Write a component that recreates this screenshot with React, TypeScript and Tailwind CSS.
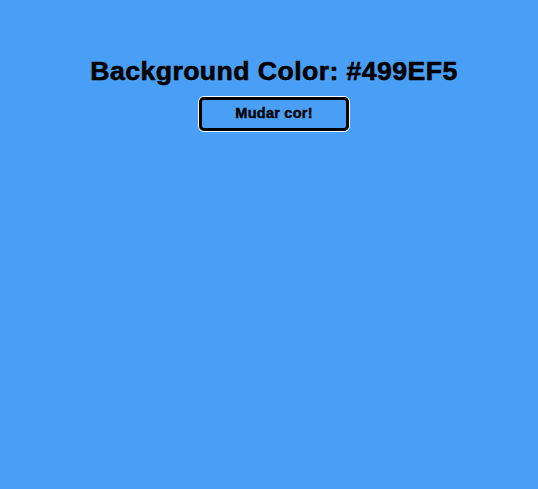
import React, { useState } from "react";

const colors = ["#499EF5", "#F5A349", "#49F5A0", "#F549C8", "#C8F549"];

const App: React.FC = () => {
  const [index, setIndex] = useState(0);
  const color = colors[index];

  return (
    <div
      className="min-h-screen w-full flex flex-col items-center pt-[58px] pl-[10px] font-['Liberation_Sans',Arial,sans-serif] text-black"
      style={{ backgroundColor: color }}
    >
      <h1 className="text-[26.7px] leading-none font-bold tracking-[0.4px] [-webkit-text-stroke:0.6px_black]">
        Background Color: {color}
      </h1>
      <button
        className="mt-[12px] h-[34px] w-[150px] rounded-[5px] border-[3px] border-black bg-transparent text-[14.6px] font-bold tracking-[0.2px] [-webkit-text-stroke:0.4px_black] shadow-[0_0_0_1px_#ffffff]"
        onClick={() => setIndex((index + 1) % colors.length)}
      >
        Mudar cor!
      </button>
    </div>
  );
};

export default App;
